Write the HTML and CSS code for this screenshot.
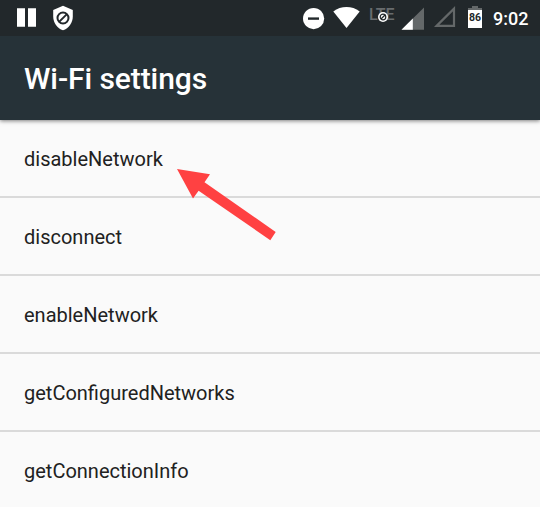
FILE: index.html
```html
<!DOCTYPE html>
<html lang="en">
<head>
    <meta charset="utf-8">
    <link rel="stylesheet" href="styles.css">
    <title>Wi-Fi settings</title>
</head>
<body>

    <div class="status-bar">
      <svg class="pause" width="19" height="36" viewBox="17 0 19 36">
        <path fill="#fff" d="M17 8.3h8v18.4h-8zM28 8.3h8v18.4h-8z"/>
      </svg>
      <svg class="shield" width="20" height="36" viewBox="53 0 20 36">
        <path fill="#fff" d="M63 5.7l9.8 4.2v6.5c0 6.2-4 11.8-9.8 13.9-5.8-2.1-9.8-7.7-9.8-13.9V9.9z"/>
        <g fill="none" stroke="#22282b" stroke-width="2">
          <circle cx="63" cy="18" r="5.5"/>
          <path d="M59.1 21.9l7.8-7.8"/>
        </g>
      </svg>

      <svg class="dnd" width="22" height="36" viewBox="303 0 22 36">
        <circle cx="313.6" cy="18.6" r="10.6" fill="#fff"/>
        <path fill="#22282b" d="M308 17.4h11v2.4h-11z"/>
      </svg>
      <svg class="wifi" width="27" height="36" viewBox="333 0 27 36">
        <path fill="#fff" d="M346.5 28.1L333.3 11.4c7.7-5.7 18.7-5.7 26.4 0z"/>
      </svg>
      <div class="lte">
        <span>LTE</span>
        <svg width="10" height="10" viewBox="0 0 10 10">
          <circle cx="5" cy="5" r="5" fill="#fff"/>
          <circle cx="5" cy="5" r="2.8" fill="none" stroke="#22282b" stroke-width="1.2"/>
          <path d="M3 7l4-4" stroke="#22282b" stroke-width="1.2"/>
        </svg>
      </div>
      <svg class="signal" width="23" height="36" viewBox="401 0 23 36">
        <path fill="#646869" d="M401.5 29.8L424 7.6v22.2z"/>
        <path fill="#fff" d="M401.5 29.8L412.8 18.6v11.2z"/>
      </svg>
      <svg class="signal-empty" width="22" height="36" viewBox="434 0 22 36">
        <path fill="none" stroke="#646869" stroke-width="2.2" d="M436.6 25.9L454 8.6V25.9z"/>
      </svg>
      <div class="battery"><span>86</span></div>
      <span class="time">9:02</span>
    </div>

    <header class="toolbar">
      <h1>Wi-Fi settings</h1>
    </header>

    <ul class="list">
      <li>disableNetwork</li>
      <li>disconnect</li>
      <li>enableNetwork</li>
      <li>getConfiguredNetworks</li>
      <li>getConnectionInfo</li>
    </ul>

    <svg class="arrow" width="100" height="74" viewBox="176 168 100 74">
      <path fill="#ff4142" d="M177 169L210 174.2L204.5 182.3L275.7 232L270.3 240.2L198.6 190.8L193 198.5z"/>
    </svg>

</body>
</html>
```
FILE: styles.css
```css
* {
  box-sizing: border-box;
  margin: 0;
  padding: 0;
}

body {
  background-color: #fafafa;
  font-family: Roboto, sans-serif;
  height: 507px;
  overflow: hidden;
  position: relative;
}

svg {
  display: block;
  flex: none;
}

/* status bar */
.status-bar {
  background-color: #22282b;
  display: flex;
  height: 36px;
  padding: 0 11px 0 17px;
  position: relative;
  z-index: 1;
}

.shield {
  margin-left: 17px;
}

.dnd {
  margin-left: auto;
}

.wifi {
  margin-left: 8px;
}

.lte {
  color: #686c6e;
  font-size: 16px;
  font-weight: 500;
  height: 36px;
  line-height: 16px;
  margin-left: 9px;
  padding-top: 7px;
  position: relative;
  width: 27px;
}

.lte svg {
  left: 9px;
  position: absolute;
  top: 12px;
}

.signal {
  margin-left: 5px;
}

.signal-empty {
  margin-left: 10px;
}

.battery {
  background-color: #fff;
  color: #22282b;
  font-size: 10.5px;
  font-weight: bold;
  height: 20px;
  line-height: 19px;
  margin: 8px 0 0 12px;
  position: relative;
  text-align: center;
  width: 14px;
}

.battery::before {
  background-color: #646869;
  content: "";
  height: 2px;
  left: 4px;
  position: absolute;
  top: -2px;
  width: 6px;
}

.battery::after {
  background-color: #646869;
  content: "";
  height: 2px;
  left: 0;
  position: absolute;
  top: 0;
  width: 14px;
}

.time {
  color: #fff;
  font-size: 18px;
  font-weight: 500;
  line-height: 37px;
  margin-left: 11px;
  width: 36px;
}

/* title */
.toolbar {
  background-color: #263238;
  box-shadow: 0 1px 4px rgba(0, 0, 0, .5);
  height: 84px;
  padding-left: 24px;
  position: relative;
}

h1 {
  color: #fff;
  font-size: 30px;
  font-weight: 500;
  letter-spacing: -.08px;
  line-height: 86px;
}

.list {
  list-style-type: none;
}

li {
  border-bottom: 2px solid #dadada;
  color: #212121;
  font-size: 20px;
  height: 78px;
  line-height: 78px;
  padding-left: 24px;
}

.arrow {
  left: 176px;
  position: absolute;
  top: 168px;
}
```
